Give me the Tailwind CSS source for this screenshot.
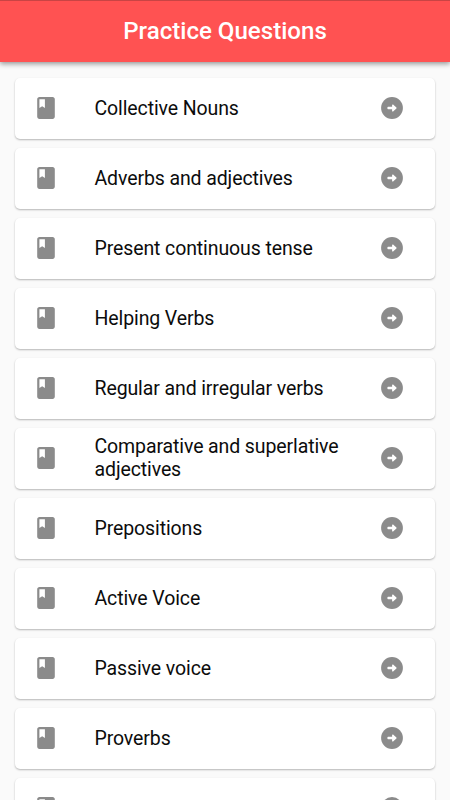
<!DOCTYPE html>
<html lang="en">
<head>
<meta charset="utf-8">
<title>Practice Questions</title>
<script src="https://cdn.jsdelivr.net/npm/@tailwindcss/browser@4"></script>
</head>
<body class="h-[800px] overflow-hidden bg-[#fafafa] font-[Roboto,sans-serif] text-[#0c0c0c]">
<svg class="hidden">
  <symbol id="book" viewBox="4 2 16 20"><path d="M18 2H6c-1.100 0-2 .9-2 2v16c0 1.100.9 2 2 2h12c1.100 0 2-.9 2-2V4c0-1.100-.9-2-2-2zM6 4h5v8l-2.500-1.500L6 12V4z"/></symbol>
  <symbol id="arrow" viewBox="0 0 22 22"><circle cx="11" cy="11" r="10.900"/><path fill="#fff" d="M7.200 9.800h3.900V8.100c0-.6.600-.9 1-.5l3.300 2.900c.3.300.3.700 0 1l-3.300 2.900c-.4.400-1 .1-1-.5v-1.700H7.200c-.5 0-.8-.3-.8-.7v-1c0-.4.300-.7.800-.7z"/></symbol>
</svg>
<header class="relative flex h-[62px] items-center justify-center border-t border-[#c94444] bg-[#ff5252] shadow-[0_2px_5px_rgba(0,0,0,0.4)]">
  <h1 class="text-[24.100px] font-medium text-white">Practice Questions</h1>
</header>
<main id="list" class="flex flex-col gap-[9.060px] px-[15px] pt-[15.520px]"></main>
<template id="row">
  <article class="flex h-[61px] w-[420px] shrink-0 items-center rounded-[5px] bg-white pl-[22px] shadow-[0_1px_2px_rgba(0,0,0,0.28)]">
    <svg class="h-[22px] w-[18px] shrink-0 fill-[#8b8b8b]" preserveAspectRatio="none"><use href="#book"/></svg>
    <p class="ml-[39.500px] w-[260px] shrink-0 text-[19.500px] leading-[23px] tracking-[-0.110px]"></p>
    <svg class="ml-[26px] size-[22px] shrink-0 fill-[#8b8b8b]"><use href="#arrow"/></svg>
  </article>
</template>
<script>
const topics = ["Collective Nouns", "Adverbs and adjectives", "Present continuous tense", "Helping Verbs", "Regular and irregular verbs", "Comparative and superlative adjectives", "Prepositions", "Active Voice", "Passive voice", "Proverbs", ""];
for (const topic of topics) {
  const row = document.getElementById("row").content.cloneNode(true);
  row.querySelector("p").textContent = topic;
  document.getElementById("list").append(row);
}
</script>
</body>
</html>
